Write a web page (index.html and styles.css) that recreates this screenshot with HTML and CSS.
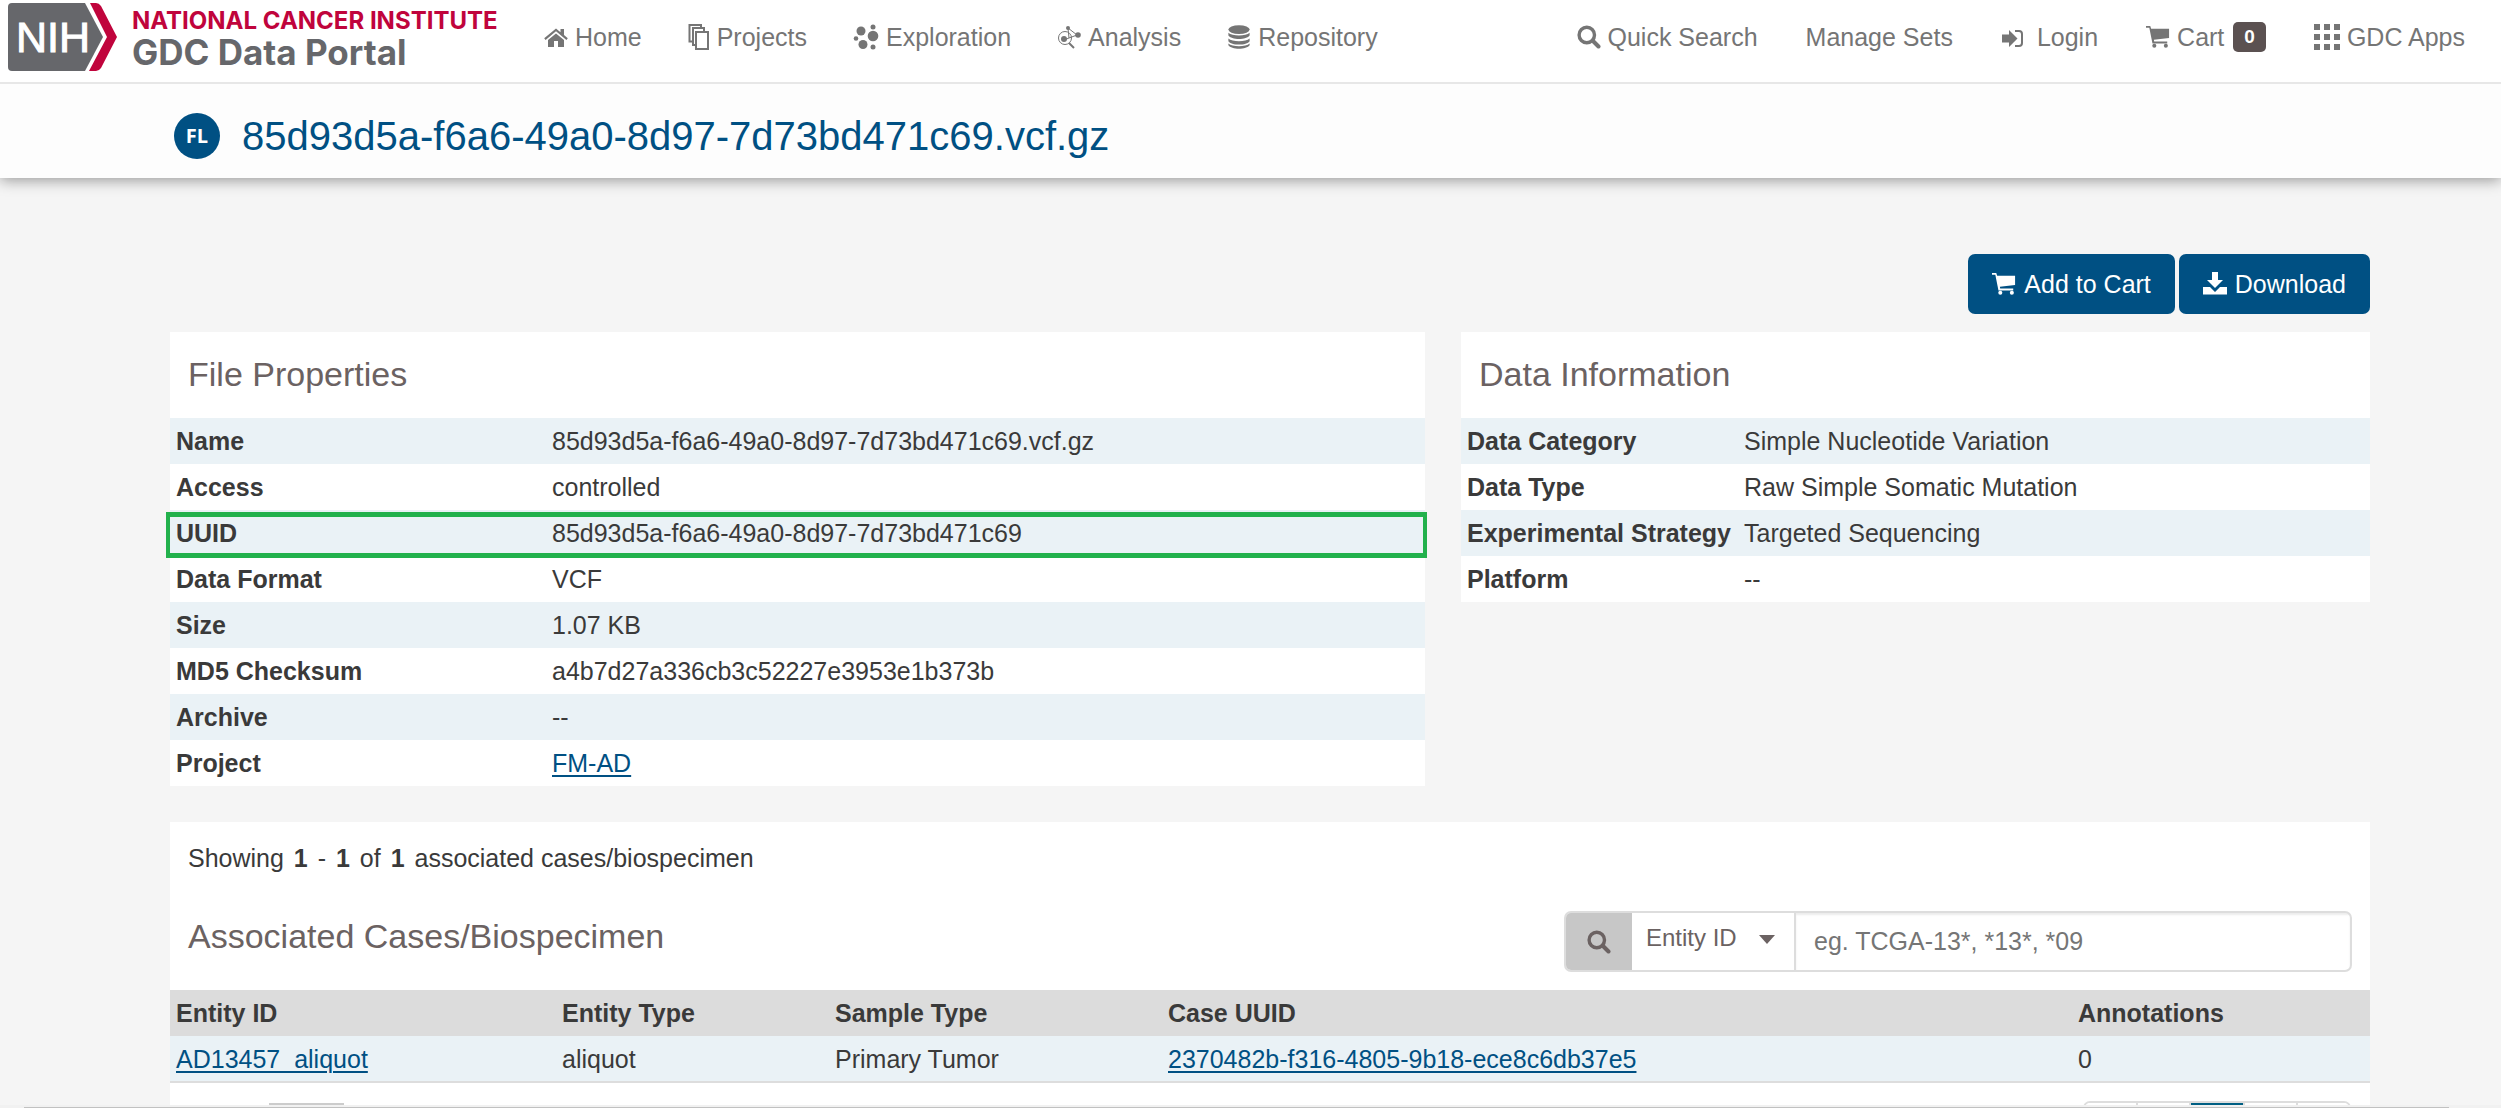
FILE: index.html
```html
<!DOCTYPE html>
<html lang="en">
<head>
<meta charset="utf-8">
<title>GDC Data Portal</title>
<link rel="stylesheet" href="styles.css">
</head>
<body>
<svg class="sprite" aria-hidden="true">
  <symbol id="cart" viewBox="0 0 26 24"><path d="M0 0h4.600l1 3H25v10L8.500 15l.4 2H23v2H7L3.600 2H0z"/><circle cx="9" cy="21.500" r="2.200"/><circle cx="21.500" cy="21.500" r="2.200"/></symbol>
  <symbol id="search" viewBox="0 0 24 24"><path fill="none" stroke="currentColor" stroke-width="3.400" d="M17.500 10a7.700 7.700 0 1 1-15.400 0 7.700 7.700 0 0 1 15.400 0z"/><path stroke="currentColor" stroke-width="4" stroke-linecap="round" d="M16 16l5.500 5.500"/></symbol>
</svg>
<header class="navbar">
  <a class="brand" href="#" aria-label="GDC Data Portal home">
    <svg class="nih" viewBox="0 0 110 68" aria-hidden="true">
      <path fill="#66676b" d="M4 0H77L95 34 77 68H4a4 4 0 0 1-4-4V4a4 4 0 0 1 4-4z"/>
      <path fill="#c0043c" d="M82 0h6q3 0 5 3l16 31-16 31q-2 3-5 3H81l18-34z"/>
      <text class="nih-text" x="8" y="49">NIH</text>
    </svg>
    <span class="brand-text"><span class="brand-top">NATIONAL CANCER INSTITUTE</span><span class="brand-name">GDC Data Portal</span></span>
  </a>
  <nav class="nav main-nav">
    <a href="#"><svg class="icon" viewBox="0 0 24 24"><path d="M12 8.500l8 6.500V22h-6v-6h-4v6H4v-7z"/><path d="M12 3.500l4.500 3.700V4H20v6l3.800 3.200-1.400 1.700L12 6.200 1.600 14.900.2 13.200z"/></svg>Home</a>
    <a href="#"><svg class="icon pages-icon" viewBox="0 0 22 26"><path fill="none" stroke="currentColor" stroke-width="2" d="M8 8h12v17H8zM8 21H5V4h11v4M5 17.500H1.500V1H13v3"/></svg>Projects</a>
    <a href="#"><svg class="icon wide" viewBox="0 0 26 26"><circle cx="8" cy="7" r="4.500"/><circle cx="20" cy="3" r="2.500"/><circle cx="20" cy="12" r="5.300"/><circle cx="3" cy="14.500" r="2.300"/><circle cx="10" cy="20.500" r="4.500"/><circle cx="20" cy="23" r="2.500"/></svg>Exploration</a>
    <a href="#"><svg class="icon" viewBox="0 0 24 24"><g fill="none" stroke="currentColor"><circle cx="8" cy="13" r="6.500"/><path d="M11 3l1 10-5 2M11 3l9 7-8 3"/><path stroke-width="2" d="M12 18l5 5"/></g><circle cx="11" cy="3" r="2"/><circle cx="21" cy="10" r="2.800"/><circle cx="7" cy="14" r="3"/></svg>Analysis</a>
    <a href="#"><svg class="icon" viewBox="0 0 24 26"><ellipse cx="12" cy="5" rx="11.500" ry="4.800"/><path d="M.5 8.500c4 4 19 4 23 0v3c-3 5-20 5-23 0zM.5 14.500c4 4 19 4 23 0v3c-3 5-20 5-23 0zM.5 20c4 4 19 4 23 0v2c-3 5-20 5-23 0z"/></svg>Repository</a>
  </nav>
  <nav class="nav user-nav">
    <a href="#"><svg class="icon"><use href="#search"/></svg>Quick Search</a>
    <a href="#">Manage Sets</a>
    <a class="login" href="#"><svg class="icon" viewBox="0 0 24 24"><path d="M1 9.500h7V5l8.500 8.500L8 22v-4.500H1z"/><path fill="none" stroke="currentColor" stroke-width="2" d="M14 6h4a3 3 0 0 1 3 3v9a3 3 0 0 1-3 3h-4"/></svg>Login</a>
    <a href="#"><svg class="icon"><use href="#cart"/></svg>Cart<span class="badge">0</span></a>
    <a href="#"><svg class="icon wide" viewBox="0 0 26 26"><path d="M0 0h6v6H0zM10 0h6v6h-6zM20 0h6v6h-6zM0 10h6v6H0zM10 10h6v6h-6zM20 10h6v6h-6zM0 20h6v6H0zM10 20h6v6h-6zM20 20h6v6h-6z"/></svg>GDC Apps</a>
  </nav>
</header>
<div class="titlebar"><span class="type">FL</span><h1>85d93d5a-f6a6-49a0-8d97-7d73bd471c69.vcf.gz</h1></div>
<main>
  <div class="actions">
    <button type="button"><svg class="icon"><use href="#cart"/></svg>Add to Cart</button>
    <button type="button"><svg class="icon" viewBox="0 0 24 24"><path d="M9 0h6v8h5l-8 8-8-8h5zM0 15h7l5 5 5-5h7v7.500H0z"/></svg>Download</button>
  </div>
  <div class="columns">
    <section class="card">
      <h2>File Properties</h2>
      <table class="props file-props">
        <tr><th scope="row">Name</th><td>85d93d5a-f6a6-49a0-8d97-7d73bd471c69.vcf.gz</td></tr>
        <tr><th scope="row">Access</th><td>controlled</td></tr>
        <tr class="marked"><th scope="row">UUID</th><td>85d93d5a-f6a6-49a0-8d97-7d73bd471c69</td></tr>
        <tr><th scope="row">Data Format</th><td>VCF</td></tr>
        <tr><th scope="row">Size</th><td>1.07 KB</td></tr>
        <tr><th scope="row">MD5 Checksum</th><td>a4b7d27a336cb3c52227e3953e1b373b</td></tr>
        <tr><th scope="row">Archive</th><td>--</td></tr>
        <tr><th scope="row">Project</th><td><a href="#">FM-AD</a></td></tr>
      </table>
    </section>
    <section class="card">
      <h2>Data Information</h2>
      <table class="props data-props">
        <tr><th scope="row">Data Category</th><td>Simple Nucleotide Variation</td></tr>
        <tr><th scope="row">Data Type</th><td>Raw Simple Somatic Mutation</td></tr>
        <tr><th scope="row">Experimental Strategy</th><td>Targeted Sequencing</td></tr>
        <tr><th scope="row">Platform</th><td>--</td></tr>
      </table>
    </section>
  </div>
  <section class="card cases">
    <p class="showing">Showing <b>1</b> - <b>1</b> of <b>1</b> associated cases/biospecimen</p>
    <div class="cases-head">
      <h2>Associated Cases/Biospecimen</h2>
      <form class="search">
        <label class="search-icon" for="q"><svg class="icon" role="img" aria-label="Search"><use href="#search"/></svg></label>
        <span class="select"><select aria-label="Search field"><option>Entity ID</option></select><svg class="caret" viewBox="0 0 16 9" aria-hidden="true"><path d="M0 0h16L8 9z"/></svg></span>
        <input id="q" type="text" placeholder="eg. TCGA-13*, *13*, *09">
      </form>
    </div>
    <table class="cases-table">
      <thead><tr><th class="c1">Entity ID</th><th class="c2">Entity Type</th><th class="c3">Sample Type</th><th class="c4">Case UUID</th><th>Annotations</th></tr></thead>
      <tbody><tr><td><a href="#">AD13457_aliquot</a></td><td>aliquot</td><td>Primary Tumor</td><td><a href="#">2370482b-f316-4805-9b18-ece8c6db37e5</a></td><td>0</td></tr></tbody>
    </table>
    <div class="pager">
      <button class="page-size" type="button" aria-label="Page size"></button>
      <div class="pages"><button type="button" aria-label="First"></button><button type="button" aria-label="Previous"></button><button class="current" type="button" aria-label="Current page"></button><button type="button" aria-label="Next"></button><button type="button" aria-label="Last"></button></div>
    </div>
  </section>
</main>
<div class="scrollbar"><div class="thumb"></div></div>
</body>
</html>
```
FILE: styles.css
```css
* { box-sizing: border-box; }
body {
  margin: 0;
  height: 100vh;
  overflow: hidden;
  display: flex;
  flex-direction: column;
  background: #f5f5f5;
  color: #3a3a3a;
  font: 25px/36px "Liberation Sans", Arial, sans-serif;
}
a { color: #005083; text-underline-offset: 3px; text-decoration-thickness: 2px; }
.sprite { position: absolute; width: 0; height: 0; }
.icon { width: 24px; height: 24px; flex: none; fill: currentColor; }
.wide { width: 26px; height: 26px; }
.pages-icon { width: 22px; height: 26px; }
.navbar {
  flex: none;
  position: relative;
  z-index: 1;
  display: flex;
  align-items: flex-start;
  height: 84px;
  padding: 0 36px 0 8px;
  background: #fff;
  border-bottom: 2px solid #e7e7e7;
}
.brand { display: flex; gap: 14px; padding-top: 3px; text-decoration: none; width: 536px; }
.nih { width: 110px; height: 68px; flex: none; }
.nih-text { font: 43px "Liberation Sans", Arial, sans-serif; fill: #fff; stroke: #fff; stroke-width: 1px; }
.brand-text { display: flex; flex-direction: column; white-space: nowrap; padding-top: 4px; }
.brand-top { color: #c0043c; font: 700 24px/28px Inter, sans-serif; }
.brand-name { color: #66676b; font: 700 35px/34px Inter, sans-serif; }
.nav { display: flex; gap: 46px; padding-top: 19px; }
.nav a { display: flex; align-items: center; gap: 7px; color: #757575; text-decoration: none; white-space: nowrap; }
.user-nav { margin-left: auto; gap: 48px; }
.nav .login { gap: 12px; }
.badge { background: #5b5151; color: #fff; border-radius: 5px; font: 700 19px/30px "Liberation Sans", sans-serif; padding: 0 11px; margin-left: 2px; }
.titlebar {
  flex: none;
  display: flex;
  align-items: center;
  gap: 22px;
  height: 94px;
  padding: 10px 174px 0;
  background: #fdfdfd;
  box-shadow: 0 2px 14px rgba(0,0,0,.4);
}
.type { width: 46px; height: 46px; border-radius: 50%; background: #005083; color: #fff; font: 700 20px/46px "Open Sans", sans-serif; text-align: center; }
h1 { margin: 0; color: #005083; font-size: 40px; line-height: 48px; font-weight: 400; }
main { flex: 1; min-height: 0; overflow: hidden; padding: 76px 131px 0 165px; }
.actions { display: flex; justify-content: flex-end; gap: 4px; }
.actions button { display: flex; align-items: center; gap: 8px; height: 60px; padding: 0 24px; border: 0; border-radius: 7px; background: #005083; color: #fff; font: inherit; }
.columns { display: grid; grid-template-columns: 1255fr 909fr; gap: 36px; align-items: start; margin: 18px 0 36px; padding-left: 5px; }
.card { background: #fff; }
h2 { margin: 0; padding: 24px 18px 26px; color: #6b6262; font-size: 34px; line-height: 36px; font-weight: 400; }
table { width: 100%; border-collapse: collapse; }
th, td { height: 46px; padding: 0 6px; text-align: left; }
.props tr:nth-child(odd), .cases-table tbody tr { background: #eaf2f6; }
.file-props th { width: 376px; }
.data-props th { width: 277px; white-space: nowrap; }
.marked { position: relative; }
.marked::after { content: ""; position: absolute; inset: 2px -2px -2px -4px; border: solid #22b14c; border-width: 5px 4px; }
.cases { margin-left: 5px; }
.showing { margin: 0; padding: 18px 18px 0; }
.showing b { padding: 0 3px; }
.cases-head { display: flex; justify-content: space-between; padding-right: 18px; }
.cases-head h2 { padding-top: 42px; }
.search { display: flex; width: 788px; height: 61px; margin: 35px 0 18px; border: 2px solid #ddd; border-radius: 7px; overflow: hidden; }
.search-icon { display: flex; align-items: center; justify-content: center; width: 66px; background: #c7c7c7; color: #6b6262; }
.select { display: flex; align-items: center; width: 164px; padding-right: 19px; border-right: 2px solid #ddd; }
select, input { height: 100%; border: 0; background: none; color: #6b6262; font: inherit; }
select { flex: 1; min-width: 0; appearance: none; font-size: 24px; padding: 0 0 7px 14px; }
.caret { width: 16px; height: 9px; flex: none; margin-bottom: 4px; fill: #6b6262; }
input { flex: 1; padding: 0 18px; box-shadow: inset 0 2px 2px rgba(0,0,0,.075); }
.cases-table thead { background: #dcdcdc; }
.cases-table tbody { border-bottom: 2px solid #ddd; }
.c1 { width: 386px; } .c2 { width: 273px; } .c3 { width: 333px; } .c4 { width: 910px; }
.pager { display: flex; justify-content: space-between; align-items: flex-start; padding: 18px 19px 0 99px; }
.page-size { width: 75px; height: 40px; margin-top: 2px; border: 2px solid #ccc; background: #fff; }
.pages { display: flex; width: 268px; border: 2px solid #ddd; border-radius: 7px; overflow: hidden; }
.pages button { flex: 1; height: 40px; border: 0; border-right: 2px solid #ddd; background: #fff; }
.pages button:last-child { border-right: 0; }
.pages .current { background: #005f83; }
.scrollbar { flex: none; height: 3px; padding: 2px 52px 0 24px; background: #f1f1f1; }
.thumb { height: 1px; background: #c1c1c1; }
```
